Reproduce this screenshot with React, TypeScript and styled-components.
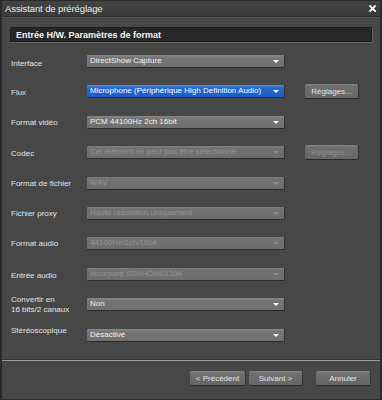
import React from "react";
import styled, { createGlobalStyle, css } from "styled-components";

const Global = createGlobalStyle`
  html, body { margin: 0; padding: 0; background: #474747; }
  body { font-family: "Liberation Sans", Arial, sans-serif; }
  * { box-sizing: border-box; }
`;

const Window = styled.div`
  width: 382px;
  height: 400px;
  background: #474747;
  border: 1px solid #2a2a2a;
  border-left-width: 2px;
  border-right-width: 2px;
  display: flex;
  flex-direction: column;
  overflow: hidden;
`;

const TitleBar = styled.div`
  height: 16px;
  flex: none;
  background: linear-gradient(#434343, #3b3b3b);
  border-bottom: 1px solid #2c2c2c;
  box-shadow: 0 1px 0 #555;
  display: flex;
  align-items: center;
  justify-content: space-between;
  padding: 0 4px 0 3px;
  color: #ececec;
  font-size: 9.5px;
  letter-spacing: -0.1px;
`;

const Close = styled.svg`
  width: 7px;
  height: 7px;
  margin-top: -1px;
`;

const Header = styled.div`
  margin: 10px 8px 0 8px;
  height: 17px;
  background: #272727;
  border: 1px solid #1c1c1c;
  box-shadow: 1px 1px 0 #626262;
  color: #f4f4f4;
  font-weight: bold;
  font-size: 9px;
  display: flex;
  align-items: center;
  padding-left: 5px;
`;

const Form = styled.div`
  margin-top: 13px;
  display: flex;
  flex-direction: column;
`;

const Row = styled.div`
  height: 30.4px;
  display: grid;
  grid-template-columns: 76px 198px 74px;
  align-items: start;
  padding-left: 9px;
`;

const Label = styled.div<{ $shift: number }>`
  color: #e6e6e6;
  font-size: 8px;
  line-height: 10px;
  transform: translateY(${(p) => p.$shift}px);
`;

const Select = styled.div<{ $active?: boolean; $disabled?: boolean }>`
  height: 13px;
  position: relative;
  background: linear-gradient(#858585 0, #858585 1px, #767676 2px, #6f6f6f 100%);
  border-bottom: 1px solid #2a2a2a;
  border-right: 1px solid #333;
  border-radius: 1px;
  color: #f2f2f2;
  font-size: 8px;
  line-height: 12px;
  padding-left: 3px;
  white-space: nowrap;
  overflow: hidden;
  ${(p) =>
    p.$active &&
    css`
      background: linear-gradient(#5e95e6 0, #3c7cdc 1px, #2366d2 3px, #1c5cc8 100%);
      border-bottom-color: #1d2d4a;
      color: #ffffff;
    `}
  ${(p) =>
    p.$disabled &&
    css`
      background: linear-gradient(#7d7d7d 0, #727272 2px, #6d6d6d 100%);
      color: #949494;
    `}
`;

const Arrow = styled.span<{ $disabled?: boolean }>`
  position: absolute;
  right: 5px;
  top: 5px;
  width: 0;
  height: 0;
  border-left: 3px solid transparent;
  border-right: 3px solid transparent;
  border-top: 3px solid ${(p) => (p.$disabled ? "#8e8e8e" : "#ffffff")};
`;

const Button = styled.button<{ $disabled?: boolean; $w?: number }>`
  height: 15px;
  width: ${(p) => p.$w ?? 54}px;
  padding: 0;
  font-family: "Liberation Sans", Arial, sans-serif;
  font-size: 8px;
  color: ${(p) => (p.$disabled ? "#8f8f8f" : "#e4e4e4")};
  background: linear-gradient(#818181 0, #818181 1px, #6f6f6f 2px, #676767 100%);
  border: none;
  border-bottom: 1px solid #2a2a2a;
  border-right: 1px solid #333;
  border-radius: 2px;
  cursor: default;
`;

const RowButton = styled(Button)`
  margin-top: -1px;
  margin-left: 20px;
`;

const Spacer = styled.div`
  flex: 1;
`;

const Separator = styled.div`
  height: 2px;
  border-top: 1px solid #333;
  border-bottom: 1px solid #9c9c9c;
  margin-bottom: 10px;
`;

const Footer = styled.div`
  display: flex;
  justify-content: flex-end;
  padding-right: 9px;
  margin-bottom: 13px;
  gap: 3px;
`;

const Gap = styled.div`
  width: 7px;
`;

type R = {
  label: React.ReactNode;
  value: string;
  shift?: number;
  active?: boolean;
  disabled?: boolean;
  button?: "on" | "off";
};

const rows: R[] = [
  { label: "Interface", value: "DirectShow Capture", shift: 4 },
  { label: "Flux", value: "Microphone (Périphérique High Definition Audio)", active: true, button: "on", shift: 3 },
  { label: "Format vidéo", value: "PCM 44100Hz 2ch 16bit", shift: 2 },
  { label: "Codec", value: "Cet élément ne peut pas être sélectionné.", disabled: true, button: "off", shift: 3 },
  { label: "Format de fichier", value: "WAV", disabled: true, shift: 2 },
  { label: "Fichier proxy", value: "Haute résolution uniquement", disabled: true, shift: 2 },
  { label: "Format audio", value: "44100Hz/2ch/16bit", disabled: true, shift: 2 },
  { label: "Entrée audio", value: "Incorporé SDI/HDMI/1394", disabled: true, shift: 3 },
  { label: <>Convertir en<br />16 bits/2 canaux</>, value: "Non", shift: -3 },
  { label: "Stéréoscopique", value: "Désactivé", shift: -3 },
];

export default function App() {
  return (
    <>
      <Global />
      <Window>
        <TitleBar>
          <span>Assistant de préréglage</span>
          <Close viewBox="0 0 7 7">
            <path d="M1 1 L6 6 M6 1 L1 6" stroke="#ffffff" strokeWidth="1.8" strokeLinecap="square" />
          </Close>
        </TitleBar>
        <Header>Entrée H/W. Paramètres de format</Header>
        <Form>
          {rows.map((r, i) => (
            <Row key={i}>
              <Label $shift={r.shift ?? 0}>{r.label}</Label>
              <Select $active={r.active} $disabled={r.disabled}>
                {r.value}
                <Arrow $disabled={r.disabled} />
              </Select>
              {r.button && <RowButton $disabled={r.button === "off"}>Réglages...</RowButton>}
            </Row>
          ))}
        </Form>
        <Spacer />
        <Separator />
        <Footer>
          <Button $w={56}>&lt; Précédent</Button>
          <Button $w={54}>Suivant &gt;</Button>
          <Gap />
          <Button $w={55}>Annuler</Button>
        </Footer>
      </Window>
    </>
  );
}
